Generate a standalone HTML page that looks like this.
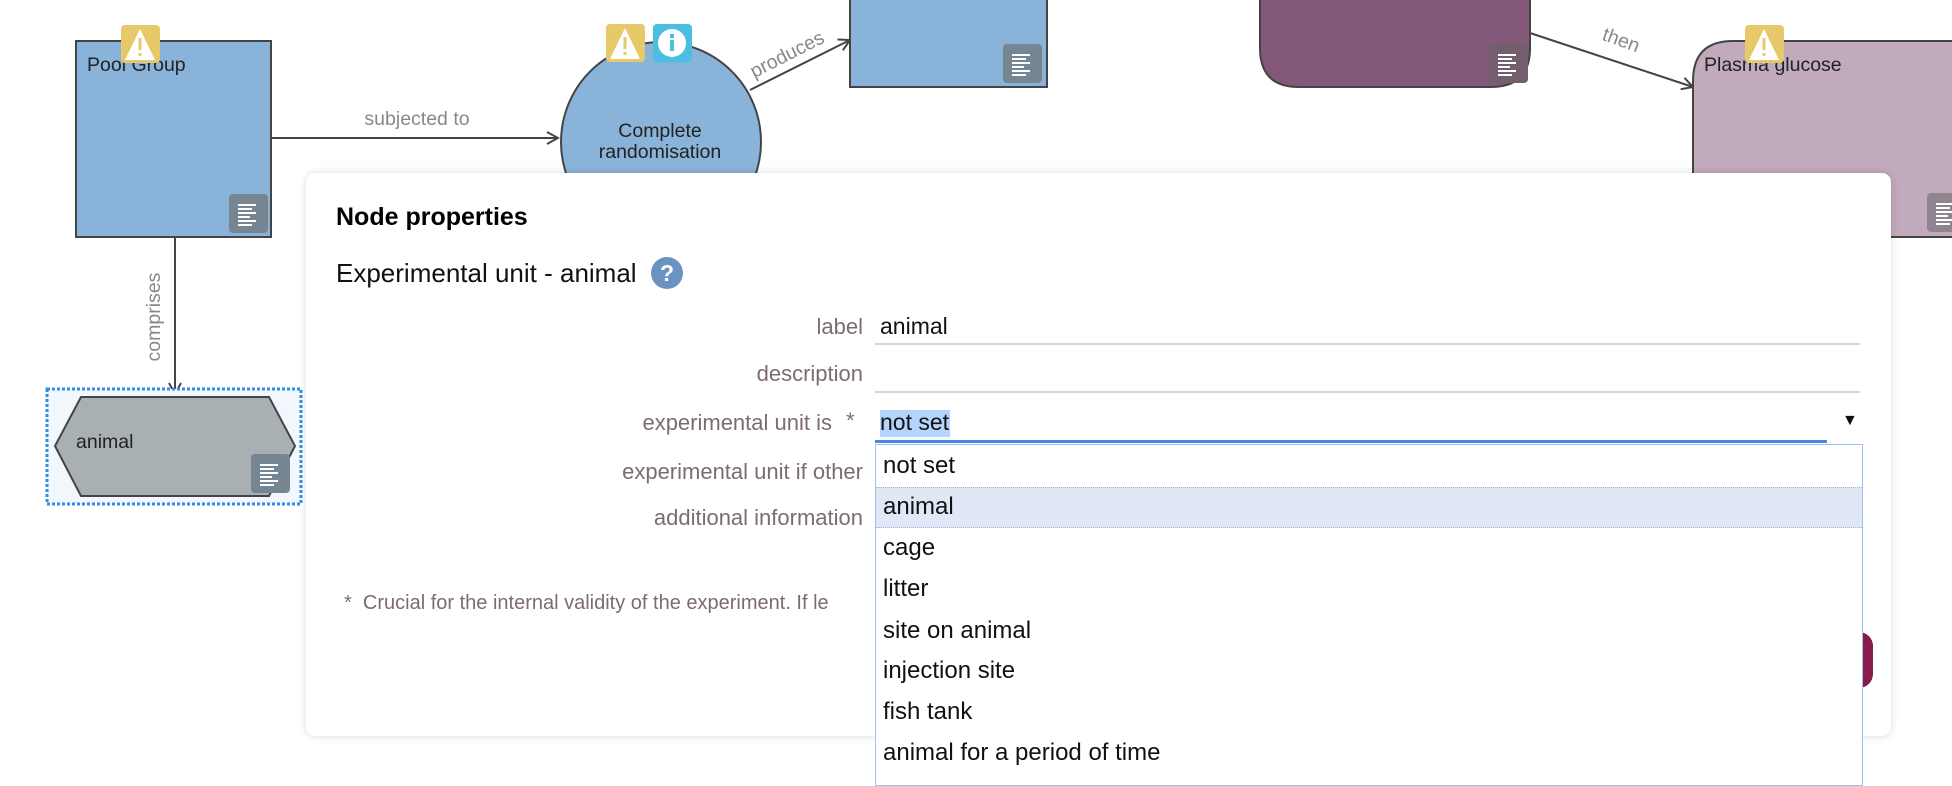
<!DOCTYPE html>
<html><head><meta charset="utf-8"><style>
html,body{margin:0;padding:0;width:1952px;height:776px;overflow:hidden;background:#fff;font-family:"Liberation Sans",Arial,sans-serif;}
.abs{position:absolute}
.note{position:absolute;width:39px;height:39px;background:#758592;border-radius:4px}
.note i{position:absolute;left:9px;height:2px;background:#fff}
.panel{position:absolute;left:306px;top:173px;width:1585px;height:563px;background:#fff;border-radius:9px;box-shadow:0 0 8px rgba(0,0,0,0.15)}
.lbl{position:absolute;right:1089px;font-size:22px;color:#7d6b72;white-space:nowrap}
.ul{position:absolute;left:875px;width:985px;height:2px;background:#d8d4d6}
.dd{position:absolute;left:875px;top:444px;width:986px;height:340px;border:1px solid #9cc3f0;background:#fff}
.it{position:absolute;left:7px;font-size:24px;color:#111}
</style></head><body>
<svg class="abs" style="left:0;top:0" width="1952" height="776">
<defs><marker id="ar" markerWidth="14" markerHeight="14" refX="12" refY="7" orient="auto" markerUnits="userSpaceOnUse"><path d="M1,1 L12,7 L1,13" fill="none" stroke="#444" stroke-width="2"/></marker></defs>
<rect x="76" y="41" width="195" height="196" fill="#8ab3d9" stroke="#444" stroke-width="2"/>
<line x1="272" y1="138" x2="558" y2="138" stroke="#444" stroke-width="2" marker-end="url(#ar)"/>
<text x="417" y="125" font-size="19.5" fill="#888" text-anchor="middle">subjected to</text>
<circle cx="661" cy="142" r="100" fill="#8ab3d9" stroke="#444" stroke-width="2"/>
<text x="660" y="137" font-size="19.5" fill="#222" text-anchor="middle">Complete</text>
<text x="660" y="158" font-size="19.5" fill="#222" text-anchor="middle">randomisation</text>
<line x1="750" y1="90" x2="850" y2="40" stroke="#444" stroke-width="2" marker-end="url(#ar)"/>
<text x="790" y="60" font-size="19.5" fill="#888" text-anchor="middle" transform="rotate(-27 790 60)">produces</text>
<rect x="850" y="-5" width="197" height="92" fill="#8ab3d9" stroke="#444" stroke-width="2"/>
<path d="M1260,-5 L1530,-5 L1530,48 Q1530,87 1491,87 L1299,87 Q1260,87 1260,48 Z" fill="#835878" stroke="#444" stroke-width="2"/>
<line x1="1530" y1="33" x2="1693" y2="87" stroke="#444" stroke-width="2" marker-end="url(#ar)"/>
<text x="1619" y="46" font-size="19.5" fill="#888" text-anchor="middle" transform="rotate(20 1619 46)">then</text>
<path d="M1733,41 L1970,41 L1970,237 L1693,237 L1693,81 Q1693,41 1733,41 Z" fill="#c0aabb" stroke="#444" stroke-width="2"/>
<text x="1704" y="71" font-size="19.5" fill="#222">Plasma glucose</text>
<line x1="175" y1="238" x2="175" y2="394" stroke="#444" stroke-width="2" marker-end="url(#ar)"/>
<text x="160" y="317" font-size="19.5" fill="#888" text-anchor="middle" transform="rotate(-90 160 317)">comprises</text>
<rect x="47" y="389" width="254" height="115" fill="#f2f7fd" stroke="#2f8fe6" stroke-width="3" stroke-dasharray="3 2"/>
<path d="M81,397 L269,397 L295,446 L269,496 L81,496 L55,446 Z" fill="#a9b0b3" stroke="#444" stroke-width="2"/>
<text x="76" y="448" font-size="19.5" fill="#222">animal</text>
<text x="87" y="71" font-size="19.5" fill="#222">Pool Group</text>
<g><rect x="121" y="25" width="39" height="38" rx="4" fill="#e8c96a"/><path d="M140,29 L155,60 L125,60 Z" fill="#fff"/><rect x="138.5" y="38" width="3" height="12" fill="#e8c96a"/><rect x="138.5" y="53" width="3" height="3" fill="#e8c96a"/></g>
<g><rect x="606" y="24" width="39" height="38" rx="4" fill="#e8c96a"/><path d="M625,28 L640,59 L610,59 Z" fill="#fff"/><rect x="623.5" y="37" width="3" height="12" fill="#e8c96a"/><rect x="623.5" y="52" width="3" height="3" fill="#e8c96a"/></g>
<g><rect x="653" y="24" width="39" height="38" rx="4" fill="#4bbfe0"/><circle cx="672" cy="43" r="14" fill="#fff"/><rect x="670" y="40" width="4" height="11" fill="#4bbfe0"/><rect x="670" y="34" width="4" height="4" fill="#4bbfe0"/></g>
<g><rect x="1745" y="25" width="39" height="38" rx="4" fill="#e8c96a"/><path d="M1764,29 L1779,60 L1749,60 Z" fill="#fff"/><rect x="1762.5" y="38" width="3" height="12" fill="#e8c96a"/><rect x="1762.5" y="53" width="3" height="3" fill="#e8c96a"/></g>
</svg>
<div class="note" style="left:229px;top:194px"><i style="top:10px;width:18px"></i><i style="top:14px;width:14px"></i><i style="top:18px;width:18px"></i><i style="top:22px;width:12px"></i><i style="top:26px;width:18px"></i><i style="top:30px;width:14px"></i></div>
<div class="note" style="left:1003px;top:44px"><i style="top:10px;width:18px"></i><i style="top:14px;width:14px"></i><i style="top:18px;width:18px"></i><i style="top:22px;width:12px"></i><i style="top:26px;width:18px"></i><i style="top:30px;width:14px"></i></div>
<div class="note" style="left:1489px;top:44px;background:#735e6d"><i style="top:10px;width:18px"></i><i style="top:14px;width:14px"></i><i style="top:18px;width:18px"></i><i style="top:22px;width:12px"></i><i style="top:26px;width:18px"></i><i style="top:30px;width:14px"></i></div>
<div class="note" style="left:1927px;top:193px;background:#8f8590"><i style="top:10px;width:18px"></i><i style="top:14px;width:14px"></i><i style="top:18px;width:18px"></i><i style="top:22px;width:12px"></i><i style="top:26px;width:18px"></i><i style="top:30px;width:14px"></i></div>
<div class="note" style="left:251px;top:454px"><i style="top:10px;width:18px"></i><i style="top:14px;width:14px"></i><i style="top:18px;width:18px"></i><i style="top:22px;width:12px"></i><i style="top:26px;width:18px"></i><i style="top:30px;width:14px"></i></div>
<div class="panel"></div>
<div class="abs" style="left:1855px;top:632px;width:18px;height:56px;background:#8a1c4a;border-radius:0 14px 14px 0"></div>
<div class="abs" style="left:336px;top:203px;font-size:25px;font-weight:bold;color:#000">Node properties</div>
<div class="abs" style="left:336px;top:258px;font-size:26px;color:#111">Experimental unit - animal</div>
<div class="abs" style="left:651px;top:257px;width:32px;height:32px;border-radius:50%;background:#6b93c2;color:#fff;font-size:23px;font-weight:bold;text-align:center;line-height:32px">?</div>
<div class="lbl" style="top:314px">label</div>
<div class="lbl" style="top:361px">description</div>
<div class="lbl" style="top:410px;right:1120px">experimental unit is</div>
<div class="abs" style="left:846px;top:408px;font-size:22px;color:#7d6b72">*</div>
<div class="lbl" style="top:459px">experimental unit if other</div>
<div class="lbl" style="top:505px">additional information</div>
<div class="abs" style="left:880px;top:313px;font-size:23px;color:#111">animal</div>
<div class="ul" style="top:343px"></div>
<div class="ul" style="top:391px"></div>
<div class="abs" style="left:880px;top:410px;width:70px;height:27px;background:#b3d4fc"></div>
<div class="abs" style="left:880px;top:409px;font-size:23px;color:#111">not set</div>
<div class="abs" style="left:1842px;top:412px;font-size:16px;color:#111">▼</div>
<div class="abs" style="left:875px;top:440px;width:952px;height:3px;background:#4a86e0"></div>
<div class="abs" style="left:344px;top:592px;font-size:20px;color:#7d6b72;white-space:nowrap">*&nbsp; Crucial for the internal validity of the experiment. If le</div>
<div class="dd">
<div class="abs" style="left:0;top:42px;width:986px;height:39px;background:#dfe8f4;border-top:1px dotted #9cb8e0;border-bottom:1px dotted #9cb8e0"></div>
<div class="it" style="top:7px">not set</div>
<div class="it" style="top:48px">animal</div>
<div class="it" style="top:89px">cage</div>
<div class="it" style="top:130px">litter</div>
<div class="it" style="top:172px">site on animal</div>
<div class="it" style="top:212px">injection site</div>
<div class="it" style="top:253px">fish tank</div>
<div class="it" style="top:294px">animal for a period of time</div>
</div>
</body></html>
